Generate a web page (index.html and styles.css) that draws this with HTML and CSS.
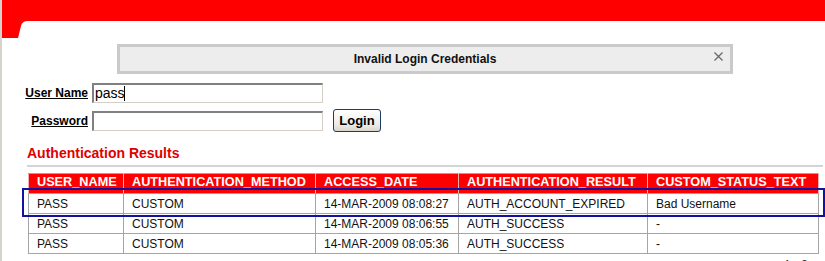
FILE: index.html
```html
<!DOCTYPE html>
<html lang="en">

<head>
    <meta charset="UTF-8">
    <meta name="viewport" content="width=device-width, initial-scale=1.0">
    <title>Login</title>
    <link rel="stylesheet" href="styles.css">
</head>

<body>
    <!-- red page banner -->
    <div class="banner">
        <div class="banner-bar"></div>
        <svg class="banner-tab" width="30" height="17" viewBox="0 0 30 17">
            <path d="M0 0H26Q20 0 19 5L16 17H0Z" fill="#ff0000" />
        </svg>
    </div>

    <div class="content">
        <!-- error message -->
        <div class="message">
            <span>Invalid Login Credentials</span>
            <button class="close-btn" title="Close">
                <svg width="9" height="9" viewBox="0 0 9 9">
                    <path d="M0.5 0.5L8.5 8.5M8.5 0.5L0.5 8.5" stroke="#666" stroke-width="1.2" fill="none" />
                </svg>
            </button>
        </div>

        <!-- login form -->
        <form class="login-form">
            <label for="username">User Name</label>
            <div class="field">
                <input type="text" id="username" value="pass">
                <span class="caret"></span>
            </div>
            <span></span>
            <label for="password">Password</label>
            <input type="password" id="password">
            <button type="button" class="login-btn">Login</button>
        </form>

        <h2>Authentication Results</h2>

        <div class="results">
            <table>
                <colgroup>
                    <col style="width: 95px">
                    <col style="width: 192px">
                    <col style="width: 143px">
                    <col style="width: 189px">
                    <col style="width: 171px">
                </colgroup>
                <thead>
                    <tr>
                        <th>USER_NAME</th>
                        <th>AUTHENTICATION_METHOD</th>
                        <th>ACCESS_DATE</th>
                        <th>AUTHENTICATION_RESULT</th>
                        <th>CUSTOM_STATUS_TEXT</th>
                    </tr>
                </thead>
                <tbody>
                    <tr>
                        <td>PASS</td>
                        <td>CUSTOM</td>
                        <td>14-MAR-2009 08:08:27</td>
                        <td>AUTH_ACCOUNT_EXPIRED</td>
                        <td>Bad Username</td>
                    </tr>
                    <tr>
                        <td>PASS</td>
                        <td>CUSTOM</td>
                        <td>14-MAR-2009 08:06:55</td>
                        <td>AUTH_SUCCESS</td>
                        <td>-</td>
                    </tr>
                    <tr>
                        <td>PASS</td>
                        <td>CUSTOM</td>
                        <td>14-MAR-2009 08:05:36</td>
                        <td>AUTH_SUCCESS</td>
                        <td>-</td>
                    </tr>
                </tbody>
            </table>
            <!-- selected row outline -->
            <div class="highlight"></div>
        </div>

        <div class="pager">1 - 3</div>
    </div>
</body>

</html>
```

FILE: styles.css
```css
* {
    margin: 0;
    padding: 0;
    box-sizing: border-box;
    font-family: 'Liberation Sans', Arial, sans-serif;
}

body {
    background: white;
    border-left: 2px solid #d6d3ce;
    min-height: 261px;
    overflow: hidden;
}

.banner-bar {
    height: 21px;
    background: #ff0000;
}

.banner-tab {
    display: block;
}

.content {
    padding-left: 20px;
}

.message {
    position: relative;
    width: 616px;
    height: 30px;
    margin: 6px 0 0 95px;
    background: #ededed;
    border: 3px solid #cacaca;
    display: flex;
    align-items: center;
    justify-content: center;
    font-size: 12px;
    font-weight: bold;
    color: #111;
}

.close-btn {
    position: absolute;
    top: 5px;
    right: 7px;
    border: none;
    background: none;
    display: flex;
    cursor: pointer;
}

.login-form {
    display: grid;
    grid-template-columns: 66px 231px auto;
    grid-auto-rows: 23px;
    column-gap: 4px;
    row-gap: 5px;
    align-items: center;
    justify-items: start;
    margin-top: 7px;
}

.login-form label {
    justify-self: end;
    font-size: 12px;
    font-weight: bold;
    color: #000;
    text-decoration: underline;
}

.field {
    position: relative;
}

.login-form input {
    width: 231px;
    height: 20px;
    padding: 0 1px;
    border-top: 2px solid #808080;
    border-left: 2px solid #808080;
    border-right: 1px solid #d4d0c8;
    border-bottom: 1px solid #d4d0c8;
    font-size: 14px;
    color: #000;
    outline: none;
    display: block;
}

.caret {
    position: absolute;
    left: 32px;
    top: 3px;
    width: 1px;
    height: 15px;
    background: #000;
}

.login-btn {
    margin-left: 6px;
    width: 48px;
    height: 23px;
    border: 1px solid #1c3b6b;
    border-radius: 3px;
    background: linear-gradient(#ffffff, #ecebe6 70%, #d8d6cc);
    font-size: 13px;
    font-weight: bold;
    color: #000;
    cursor: pointer;
}

h2 {
    margin: 13px 2px 0 5px;
    font-size: 14px;
    line-height: 16px;
    color: #e00000;
    padding-bottom: 4px;
    border-bottom: 2px solid #d4d4d4;
}

.results {
    position: relative;
    margin-top: 6px;
}

table {
    margin-left: 6px;
    width: 790px;
    table-layout: fixed;
    border-collapse: collapse;
}

th,
td {
    height: 20px;
    padding: 0 8px;
    text-align: left;
    white-space: nowrap;
    border: 1px solid #a5a5a5;
}

th {
    padding-bottom: 4px;
    background: #ff0000;
    color: white;
    font-size: 12.7px;
    font-weight: bold;
    border-color: #a5a5a5 #f4b0b0;
}

td {
    font-size: 12px;
    color: #111;
}

.highlight {
    position: absolute;
    left: 0;
    top: 15px;
    width: 803px;
    height: 29px;
    border: 2px solid #1212a2;
}

.pager {
    margin-top: 4px;
    padding-right: 17px;
    text-align: right;
    font-size: 12px;
    color: #333;
}
```
